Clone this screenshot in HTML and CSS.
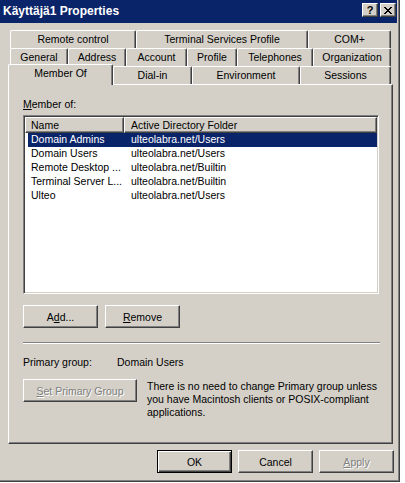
FILE: index.html
```html
<!DOCTYPE html>
<html lang="fi">
<head>
<meta charset="utf-8">
<title>Käyttäjä1 Properties</title>
<link rel="stylesheet" href="styles.css">
</head>
<body>
<div class="window">
  <div class="titlebar">
    <span class="title">Käyttäjä1 Properties</span>
    <div class="capbtns">
      <div class="capbtn help">?</div>
      <div class="capbtn close">
        <svg width="8" height="7" viewBox="0 0 8 7" shape-rendering="crispEdges">
          <path d="M0 0h2v1h-2zM6 0h2v1h-2zM1 1h2v1h-2zM5 1h2v1h-2zM2 2h4v1h-4zM3 3h2v1h-2zM2 4h4v1h-4zM1 5h2v1h-2zM5 5h2v1h-2zM0 6h2v1h-2zM6 6h2v1h-2z" fill="#000"/>
        </svg>
      </div>
    </div>
  </div>

  <div class="tabs">
    <div class="tabrow row1">
      <div class="tab">Remote control</div>
      <div class="tab">Terminal Services Profile</div>
      <div class="tab">COM+</div>
    </div>
    <div class="tabrow row2">
      <div class="tab">General</div>
      <div class="tab">Address</div>
      <div class="tab">Account</div>
      <div class="tab">Profile</div>
      <div class="tab">Telephones</div>
      <div class="tab">Organization</div>
    </div>
    <div class="tabrow row3">
      <div class="tab selected">Member Of</div>
      <div class="tab">Dial-in</div>
      <div class="tab">Environment</div>
      <div class="tab">Sessions</div>
    </div>
  </div>

  <div class="panel">
    <div class="label"><u>M</u>ember of:</div>
    <div class="listbox">
      <div class="lvheader">
        <div class="hcell c1">Name</div>
        <div class="hcell c2">Active Directory Folder</div>
      </div>
      <div class="lvrow sel"><span class="col1">Domain Admins</span><span class="col2">ulteolabra.net/Users</span></div>
      <div class="lvrow"><span class="col1">Domain Users</span><span class="col2">ulteolabra.net/Users</span></div>
      <div class="lvrow"><span class="col1">Remote Desktop ...</span><span class="col2">ulteolabra.net/Builtin</span></div>
      <div class="lvrow"><span class="col1">Terminal Server L...</span><span class="col2">ulteolabra.net/Builtin</span></div>
      <div class="lvrow"><span class="col1">Ulteo</span><span class="col2">ulteolabra.net/Users</span></div>
    </div>
    <div class="btnrow">
      <div class="btn">A<u>d</u>d...</div>
      <div class="btn"><u>R</u>emove</div>
    </div>
    <div class="sep"></div>
    <div class="primary">
      <span class="plabel">Primary group:</span>
      <span>Domain Users</span>
    </div>
    <div class="setrow">
      <div class="btn wide disabled"><u>S</u>et Primary Group</div>
      <p class="desc">There is no need to change Primary group unless<br>you have Macintosh clients or POSIX-compliant<br>applications.</p>
    </div>
  </div>

  <div class="footer">
    <div class="btn default">OK</div>
    <div class="btn">Cancel</div>
    <div class="btn disabled"><u>A</u>pply</div>
  </div>
</div>
</body>
</html>
```

FILE: styles.css
```css
body {
  margin: 0;
  background: #ffffff;
  font-family: "Liberation Sans", Arial, sans-serif;
  font-size: 10.5px;
  color: #000;
}

.window {
  width: 400px;
  height: 482px;
  box-sizing: border-box;
  background: #d4d0c8;
  border-right: 1px solid #404040;
  border-bottom: 1px solid #404040;
  box-shadow: inset -1px -1px #808080;
}

.titlebar {
  height: 23px;
  margin-right: 2px;
  background: #0a246a;
  display: flex;
  justify-content: space-between;
}

.title {
  color: #fff;
  font-weight: bold;
  font-size: 12px;
  line-height: 23px;
  padding-left: 3px;
}

.capbtns {
  display: flex;
  gap: 2px;
  margin-top: 3px;
  margin-right: 1px;
}

.capbtn {
  width: 16px;
  height: 14px;
  box-sizing: border-box;
  background: #d4d0c8;
  border: 1px solid;
  border-color: #fff #404040 #404040 #fff;
  box-shadow: inset -1px -1px #808080;
  display: flex;
  align-items: center;
  justify-content: center;
}

.help {
  font-weight: bold;
  font-size: 11px;
  line-height: 11px;
}

.tabs {
  margin-top: 7px;
}

.tabrow {
  display: grid;
  grid-template-rows: 18px;
  height: 18px;
  width: 381px;
  margin-left: 10px;
}

.row1 { grid-template-columns: 126px 172px 83px; }
.row2 { grid-template-columns: 58px 58px 61px 50px 76px 78px; }
.row3 { grid-template-columns: 103px 79px 108px 91px; }

.tab {
  box-sizing: border-box;
  height: 18px;
  background: #d4d0c8;
  border-top: 1px solid #fff;
  border-left: 1px solid #fff;
  border-right: 1px solid #404040;
  box-shadow: inset -1px 0 #808080;
  border-radius: 2px 2px 0 0;
  text-align: center;
  line-height: 17px;
  white-space: nowrap;
}

.tab.selected {
  position: relative;
  z-index: 1;
  margin: -2px 0 0 -2px;
  height: 21px;
}

.panel {
  box-sizing: border-box;
  width: 385px;
  height: 360px;
  margin-left: 8px;
  border: 1px solid;
  border-color: #fff #404040 #404040 #fff;
  box-shadow: inset -1px -1px #808080;
  padding: 13px 12px 0 14px;
}

.label {
  line-height: 13px;
}

.listbox {
  box-sizing: border-box;
  margin-top: 4px;
  width: 356px;
  height: 179px;
  background: #fff;
  border: 1px solid;
  border-color: #808080 #fff #fff #808080;
  box-shadow: inset 1px 1px #404040, inset -1px -1px #d4d0c8;
  padding: 1px;
}

.lvheader {
  display: flex;
  height: 16px;
}

.hcell {
  box-sizing: border-box;
  height: 16px;
  background: #d4d0c8;
  border: 1px solid;
  border-color: #fff #404040 #404040 #fff;
  box-shadow: inset -1px -1px #808080;
  line-height: 14px;
  white-space: nowrap;
}

.hcell.c1 { width: 99px; padding-left: 5px; }
.hcell.c2 { width: 253px; padding-left: 6px; }

.lvrow {
  display: grid;
  grid-template-columns: 96px 1fr;
  margin-left: 3px;
  height: 14px;
  line-height: 13px;
  white-space: nowrap;
}

.lvrow .col1 { padding-left: 3px; }
.lvrow .col2 { padding-left: 7px; }

.lvrow.sel {
  background: #0a246a;
  color: #fff;
}

.btnrow {
  display: flex;
  gap: 7px;
  margin-top: 11px;
}

.btn {
  box-sizing: border-box;
  width: 75px;
  height: 23px;
  background: #d4d0c8;
  border: 1px solid;
  border-color: #fff #404040 #404040 #fff;
  box-shadow: inset -1px -1px #808080;
  display: flex;
  align-items: center;
  justify-content: center;
  white-space: nowrap;
}

.btn.default {
  border-color: #000;
  box-shadow: inset 1px 1px #fff, inset -1px -1px #404040, inset -2px -2px #808080;
}

.btn.disabled {
  color: #808080;
  text-shadow: 1px 1px #fff;
}

.btn.wide {
  width: 114px;
  flex: none;
}

.sep {
  margin-top: 14px;
  border-top: 1px solid #808080;
  border-bottom: 1px solid #fff;
}

.primary {
  display: flex;
  margin-top: 12px;
  line-height: 13px;
}

.plabel {
  width: 94px;
}

.setrow {
  display: flex;
  align-items: flex-start;
  margin-top: 10px;
}

.desc {
  margin: 0 0 0 10px;
  padding-top: 1px;
  line-height: 13px;
  white-space: nowrap;
}

.footer {
  display: flex;
  justify-content: flex-end;
  gap: 6px;
  margin-top: 6px;
  padding-right: 5px;
}
```
